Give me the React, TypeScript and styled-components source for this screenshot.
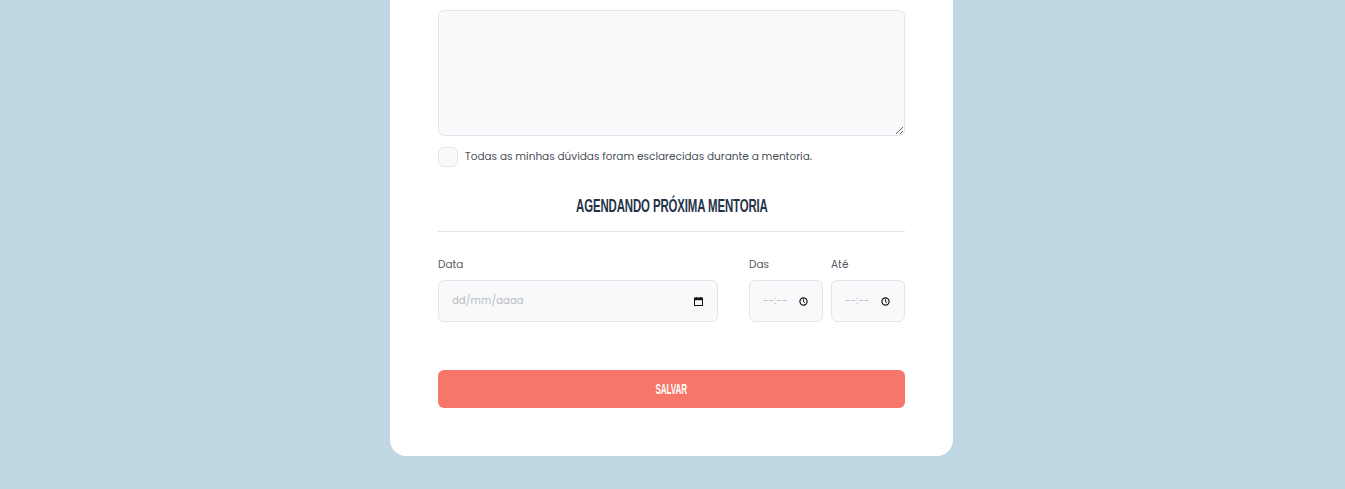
import styled, { createGlobalStyle } from 'styled-components';

const GlobalStyle = createGlobalStyle`
  html, body {
    margin: 0;
    padding: 0;
    background: #bfd7e3;
    font-family: 'Poppins', 'Open Sans', 'Noto Sans', sans-serif;
  }
`;

const Page = styled.div`
  display: flex;
  justify-content: center;
  padding: 0 2px 33px 0;
`;

const Card = styled.form`
  width: 563px;
  box-sizing: border-box;
  background: #fff;
  border-radius: 0 0 16px 16px;
  padding: 10px 48px 48px;
  display: flex;
  flex-direction: column;
`;

const TextArea = styled.textarea`
  display: block;
  width: 100%;
  height: 126px;
  box-sizing: border-box;
  background: #f8f9fb;
  border: 1px solid #e3e5e8;
  border-radius: 6px;
  resize: vertical;
  outline: none;
  font-family: inherit;
`;

const CheckRow = styled.label`
  display: flex;
  align-items: center;
  gap: 7px;
  margin-top: 11px;
  font-size: 10.5px;
  color: #4a4f57;
`;

const CheckBox = styled.span`
  width: 20px;
  height: 20px;
  box-sizing: border-box;
  border: 1px solid #e3e5e8;
  border-radius: 6px;
  background: #f8f9fb;
  flex: none;
`;

const SectionTitle = styled.h2`
  margin: 29px 0 0;
  padding-bottom: 15px;
  border-bottom: 1px solid #e4e4e4;
  text-align: center;
  font-size: 18px;
  line-height: 20px;
  color: #1f3447;
`;

const Condensed = styled.span<{ $scale: number }>`
  display: inline-block;
  font-family: 'Liberation Sans', 'Arial', sans-serif;
  font-weight: 700;
  transform: scaleX(${(p) => p.$scale});
  letter-spacing: -0.2px;
`;

const FieldRow = styled.div`
  display: flex;
  gap: 8px;
  margin-top: 25px;
`;

const Field = styled.div<{ $w: number; $gapLeft?: number }>`
  display: flex;
  flex-direction: column;
  width: ${(p) => p.$w}px;
  margin-left: ${(p) => p.$gapLeft || 0}px;
`;

const Label = styled.span`
  font-size: 10.5px;
  line-height: 16px;
  color: #555a61;
  margin-bottom: 7px;
`;

const InputBox = styled.div`
  height: 42px;
  box-sizing: border-box;
  background: #f8f9fb;
  border: 1px solid #e3e5e8;
  border-radius: 6px;
  display: flex;
  align-items: center;
  justify-content: space-between;
  padding: 0 14px 0 13px;
  font-size: 10px;
  color: #b9bcc2;
`;

const Placeholder = styled.span`
  letter-spacing: 0.1px;
`;

const SaveButton = styled.button`
  margin-top: 48px;
  height: 38px;
  border: none;
  border-radius: 6px;
  background: #f67769;
  color: #fff;
  font-size: 14px;
  cursor: pointer;
`;

const CalendarIcon = () => (
  <svg width="9" height="9" viewBox="0 0 9 9">
    <rect x="0.5" y="1" width="8" height="7.5" fill="none" stroke="#111" strokeWidth="1" />
    <rect x="0.5" y="1" width="8" height="2.2" fill="#111" />
    <rect x="2" y="0" width="1" height="1.5" fill="#111" />
    <rect x="6" y="0" width="1" height="1.5" fill="#111" />
  </svg>
);

const ClockIcon = () => (
  <svg width="9" height="9" viewBox="0 0 10 10">
    <circle cx="5" cy="5" r="4" fill="none" stroke="#111" strokeWidth="1.3" />
    <path d="M5 2.6V5.2L6.6 6.2" fill="none" stroke="#111" strokeWidth="1.1" />
  </svg>
);

export default function App() {
  return (
    <>
      <GlobalStyle />
      <Page>
        <Card onSubmit={(e) => e.preventDefault()}>
          <TextArea />
          <CheckRow>
            <CheckBox />
            Todas as minhas dúvidas foram esclarecidas durante a mentoria.
          </CheckRow>
          <SectionTitle>
            <Condensed $scale={0.635}>AGENDANDO PRÓXIMA MENTORIA</Condensed>
          </SectionTitle>
          <FieldRow>
            <Field $w={280}>
              <Label>Data</Label>
              <InputBox>
                <Placeholder>dd/mm/aaaa</Placeholder>
                <CalendarIcon />
              </InputBox>
            </Field>
            <Field $w={74} $gapLeft={23}>
              <Label>Das</Label>
              <InputBox>
                <Placeholder>--:--</Placeholder>
                <ClockIcon />
              </InputBox>
            </Field>
            <Field $w={74}>
              <Label>Até</Label>
              <InputBox>
                <Placeholder>--:--</Placeholder>
                <ClockIcon />
              </InputBox>
            </Field>
          </FieldRow>
          <SaveButton type="submit">
            <Condensed $scale={0.58}>SALVAR</Condensed>
          </SaveButton>
        </Card>
      </Page>
    </>
  );
}
